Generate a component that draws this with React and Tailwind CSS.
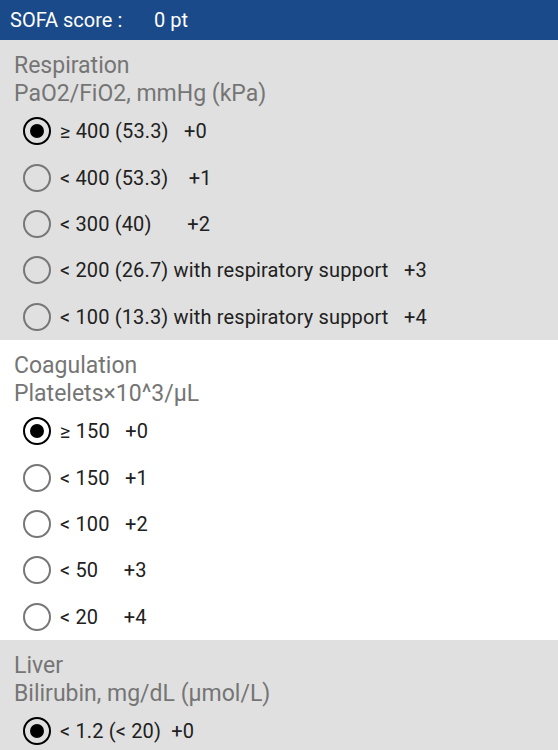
import { useState } from 'react';

const sections = [
  {
    title: 'Respiration',
    unit: 'PaO2/FiO2, mmHg (kPa)',
    bg: 'bg-[#e0e0e0]',
    options: [
      '≥ 400 (53.3)   +0',
      '< 400 (53.3)    +1',
      '< 300 (40)       +2',
      '< 200 (26.7) with respiratory support   +3',
      '< 100 (13.3) with respiratory support   +4',
    ],
  },
  {
    title: 'Coagulation',
    unit: 'Platelets×10^3/μL',
    bg: 'bg-white',
    options: ['≥ 150   +0', '< 150   +1', '< 100   +2', '< 50     +3', '< 20     +4'],
  },
  {
    title: 'Liver',
    unit: 'Bilirubin, mg/dL (μmol/L)',
    bg: 'bg-[#e0e0e0]',
    options: ['< 1.2 (< 20)  +0', '1.2–1.9 (20-32)  +1', '2.0–5.9 (33-101)  +2'],
  },
];

function Radio({ checked }) {
  return (
    <span
      className={`flex h-[28px] w-[28px] shrink-0 items-center justify-center rounded-full border-[2.5px] ${
        checked ? 'border-black' : 'border-[#777]'
      }`}
    >
      {checked && <span className="h-[14px] w-[14px] rounded-full bg-black" />}
    </span>
  );
}

function Section({ section, value, onPick }) {
  return (
    <div className={`${section.bg} pt-[12px]`}>
      <div className="px-[14px] text-[23px] leading-[28px] text-[#757575]">
        <div>{section.title}</div>
        <div>{section.unit}</div>
      </div>
      {section.options.map((opt, i) => (
        <button
          key={i}
          onClick={() => onPick(i)}
          className="flex h-[46.4px] w-full items-center gap-[9px] pl-[23px] text-left"
        >
          <Radio checked={value === i} />
          <span className="whitespace-pre text-[20px] tracking-[0.15px] text-[#212121]">{opt}</span>
        </button>
      ))}
    </div>
  );
}

export default function App() {
  const [picked, setPicked] = useState([0, 0, 0]);
  const score = 0;

  return (
    <div className="h-[750px] w-[558px] overflow-hidden bg-white" style={{ fontFamily: 'Roboto, sans-serif' }}>
      <div className="flex h-[40px] items-center bg-[#1a4a8a] px-[10px] text-[20px] text-white">
        <span className="w-[144px]">SOFA score :</span>
        <span>{score} pt</span>
      </div>
      {sections.map((s, idx) => (
        <Section
          key={s.title}
          section={s}
          value={picked[idx]}
          onPick={(i) => setPicked((p) => p.map((v, j) => (j === idx ? i : v)))}
        />
      ))}
    </div>
  );
}
